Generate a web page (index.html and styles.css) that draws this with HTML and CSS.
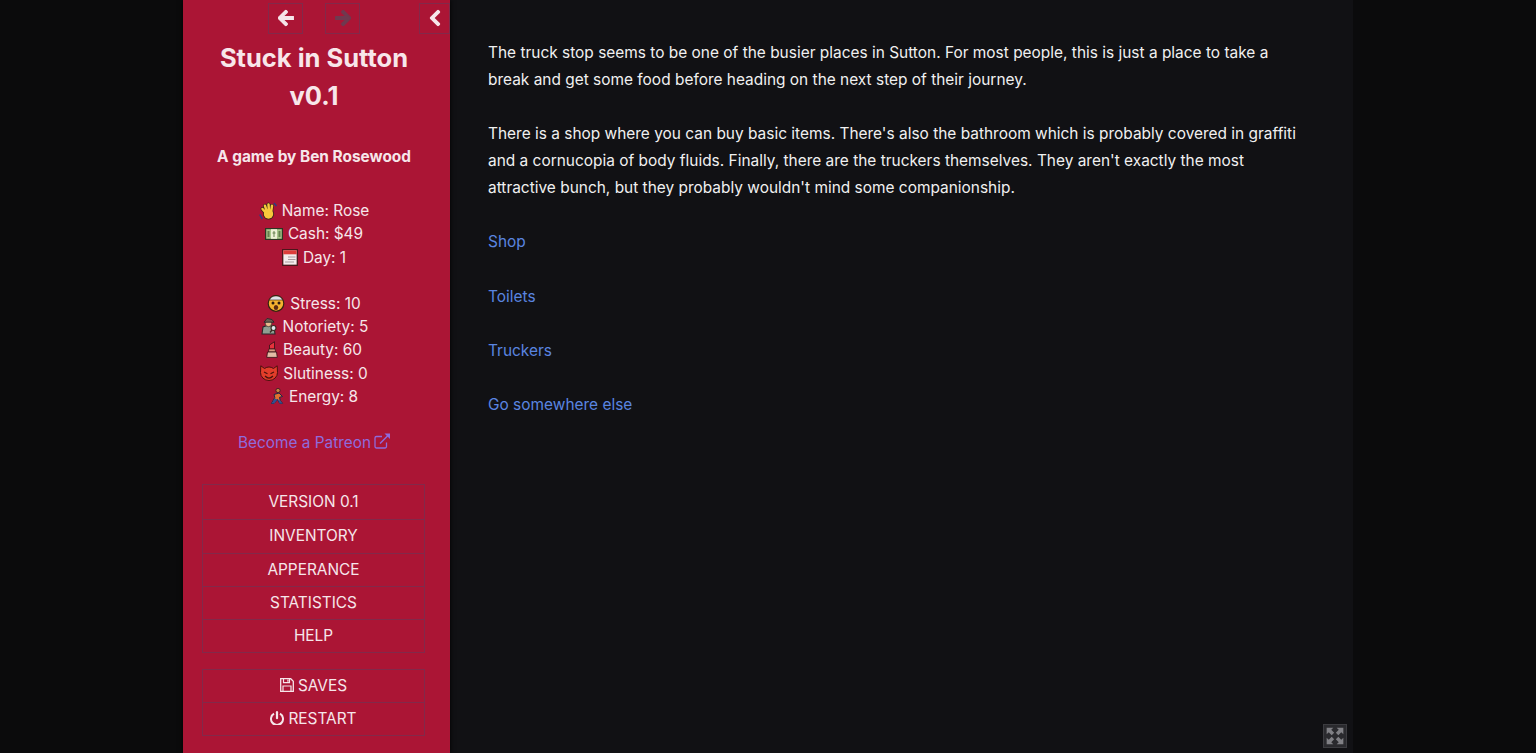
FILE: index.html
```html
<!DOCTYPE html>
<html lang="en">
<head>
<meta charset="utf-8">
<title>Stuck in Sutton</title>
<link rel="stylesheet" href="styles.css">
</head>
<body>
<div class="app">
  <aside class="sidebar">
    <div class="toolbar">
      <button class="tool tool-back" aria-label="Back"><svg viewBox="0 0 448 512" class="tool-icon"><path d="M257.5 445.1l-22.2 22.2c-9.4 9.4-24.6 9.4-33.9 0L7 273c-9.4-9.4-9.4-24.6 0-33.9L201.4 44.7c9.4-9.4 24.6-9.4 33.9 0l22.2 22.2c9.5 9.5 9.3 25-.4 34.3L136.6 216H424c13.3 0 24 10.7 24 24v32c0 13.3-10.7 24-24 24H136.6l120.5 114.8c9.8 9.3 10 24.8.4 34.3z"/></svg></button>
      <button class="tool tool-forward" aria-label="Forward"><svg viewBox="0 0 448 512" class="tool-icon dim"><path d="M190.5 66.9l22.2-22.2c9.4-9.4 24.6-9.4 33.9 0L441 239c9.4 9.4 9.4 24.6 0 33.9L246.6 467.3c-9.4 9.4-24.6 9.4-33.9 0l-22.2-22.2c-9.5-9.5-9.3-25 .4-34.3L311.4 296H24c-13.3 0-24-10.7-24-24v-32c0-13.3 10.7-24 24-24h287.4L190.9 101.2c-9.8-9.3-10-24.8-.4-34.3z"/></svg></button>
      <button class="tool tool-toggle" aria-label="Hide sidebar"><svg viewBox="0 0 320 512" class="tool-icon"><path d="M34.5 239L228.9 44.7c9.4-9.4 24.6-9.4 33.9 0l22.7 22.7c9.4 9.4 9.4 24.5 0 33.9L131.5 256l154 154.8c9.3 9.4 9.3 24.5 0 33.9l-22.7 22.7c-9.4 9.4-24.6 9.4-33.9 0L34.5 273c-9.4-9.4-9.4-24.6 0-34z"/></svg></button>
    </div>
    <h1 class="title">Stuck in Sutton<br>v0.1</h1>
    <p class="byline">A game by Ben Rosewood</p>

    <div class="stats">
      <div class="stat"><svg class="emoji" viewBox="0 0 18 18"><g fill="none" stroke="#33261a" stroke-width="3.800" stroke-linecap="round"><path d="M7 11L3.500 7M8 10L6 3.800M10 10L9.500 2.500M12 10.500L13 3.800"/></g><circle cx="9.500" cy="12" r="5.500" fill="#33261a"/><g fill="none" stroke="#f8c83c" stroke-width="2.500" stroke-linecap="round"><path d="M7 11L3.500 7M8 10L6 3.800M10 10L9.500 2.500M12 10.500L13 3.800"/></g><circle cx="9.500" cy="12" r="4.700" fill="#f8c83c"/><path d="M0.800 12.500l2.500 4.500M15 1l2.500 3" fill="none" stroke="#2c3f80" stroke-width="1.600"/></svg>Name: Rose</div>
      <div class="stat"><svg class="emoji emoji-cash" viewBox="0 0 18 12"><rect x="0.600" y="0.600" width="16.800" height="10.800" fill="#a8c48a" stroke="#2c3622" stroke-width="1.200"/><rect x="6" y="1.200" width="6" height="9.600" fill="#eef0d6"/><path d="M2.500 3h2v6h-2zM13.500 3h2v6h-2z" fill="#667f4e"/><path d="M9 3v6M7.500 5h3" stroke="#667f4e"/></svg>Cash: $49</div>
      <div class="stat"><svg class="emoji emoji-cal" viewBox="0 0 16 17"><rect x="0.700" y="0.700" width="14.600" height="15.600" fill="#f4ecec" stroke="#451418" stroke-width="1.300"/><rect x="1.300" y="1.300" width="13.400" height="4" fill="#dd3d3a"/><path d="M6 8h7.500M6 10.500h7.500M3 13h9" stroke="#a89a9e" stroke-width="1.100"/></svg>Day: 1</div>
      <div class="stat stat-gap"><svg class="emoji" viewBox="0 0 18 18"><circle cx="9" cy="9.500" r="7.800" fill="#f6b22f" stroke="#33240f" stroke-width="1.200"/><path d="M2.500 6C4 0.500 14 0.500 15.500 6z" fill="#dfe2ea" stroke="#33240f" stroke-width="0.600"/><circle cx="6" cy="9" r="1.500" fill="#2a1a10"/><circle cx="12" cy="9" r="1.500" fill="#2a1a10"/><ellipse cx="9" cy="13.500" rx="2.200" ry="2.500" fill="#5b2a10"/></svg>Stress: 10</div>
      <div class="stat"><svg class="emoji" viewBox="0 0 18 17"><path d="M2 16.500l1-7 5.500-2 5.500 2 1 7z" fill="#8f9e92" stroke="#27292a" stroke-width="1.100"/><circle cx="8.500" cy="6" r="3.200" fill="#e9bb8d" stroke="#27292a" stroke-width="0.700"/><path d="M4 4.700L7 1l5 1 2 2.700z" fill="#6d5d50" stroke="#27292a" stroke-width="0.900"/><circle cx="13.500" cy="10.500" r="2.500" fill="#dce8ee" stroke="#3a2a20" stroke-width="1.100"/><path d="M12 12.500l-2 2.500" stroke="#3a2a20" stroke-width="1.300"/></svg>Notoriety: 5</div>
      <div class="stat"><svg class="emoji emoji-lip" viewBox="0 0 12 17"><path d="M3.500 8V4L8.500 0.700V8z" fill="#e6323c" stroke="#40141a" stroke-width="0.900"/><path d="M2.800 8h6.400l.3 3H2.500z" fill="#d89a80" stroke="#40141a" stroke-width="0.800"/><path d="M1.500 11h9l.8 5.400H.7z" fill="#e2bca6" stroke="#40141a" stroke-width="0.900"/></svg>Beauty: 60</div>
      <div class="stat"><svg class="emoji" viewBox="0 0 18 16"><path d="M0.800 0.800L4.500 3.500a8 8 0 019 0L17.200 0.800l.3 6.700a8.500 8 0 11-17 0z" fill="#e23d2a" stroke="#4a120c" stroke-width="1"/><path d="M4 7l3.500 1.700M14 7l-3.500 1.700M5 11c2.500 2.700 5.500 2.700 8 0" stroke="#4a120c" stroke-width="1.200" fill="none"/></svg>Slutiness: 0</div>
      <div class="stat"><svg class="emoji emoji-run" viewBox="0 0 14 16"><circle cx="8" cy="2.500" r="2.100" fill="#c9853e" stroke="#1e1a20" stroke-width="0.700"/><path d="M4 6.500L9 5l3.500 3.500-3 .8.700 3 2.300 3H9.700L7.500 11.500 4 15.500H1.500l3.300-6z" fill="#e0722e" stroke="#1c2a4c" stroke-width="1"/><path d="M7.500 11.500L4 15.500H1.500l3.300-5zM10 12.500l2.500 3H9.700l-2-4z" fill="#2f4f96"/></svg>Energy: 8</div>
    </div>

    <a class="patreon" href="#">Become a Patreon<svg class="ext" viewBox="0 0 16 16"><path fill="none" stroke="currentColor" stroke-width="1.300" d="M12.500 9.500v4a1.500 1.500 0 01-1.500 1.500H2.500A1.500 1.500 0 011 13.500V5a1.500 1.500 0 011.500-1.500H8"/><path fill="none" stroke="currentColor" stroke-width="1.500" d="M6 10.500L14.500 2"/><path fill="currentColor" d="M10.500 .5H16V6z"/></svg></a>

    <nav class="menu">
      <a class="menu-item">VERSION 0.1</a>
      <a class="menu-item">INVENTORY</a>
      <a class="menu-item">APPERANCE</a>
      <a class="menu-item">STATISTICS</a>
      <a class="menu-item">HELP</a>
    </nav>
    <nav class="menu menu-system">
      <a class="menu-item"><svg class="mi" viewBox="0 0 14 14"><path fill="none" stroke="currentColor" stroke-width="1.300" d="M.7.700h10l2.600 2.600v10H.7z"/><path fill="none" stroke="currentColor" stroke-width="1.200" d="M3.500.700v4h6v-4M3 13.300V8h8v5.300"/><path fill="currentColor" d="M7.300 1.500h1.300v2.300H7.300z"/></svg>SAVES</a>
      <a class="menu-item"><svg class="mi mi-power" viewBox="0 0 14 14"><path fill="none" stroke="currentColor" stroke-width="2" d="M4 2.700a6 6 0 106 0"/><path fill="none" stroke="currentColor" stroke-width="2.200" stroke-linecap="round" d="M7 1.200v6"/></svg>RESTART</a>
    </nav>
  </aside>

  <main class="story">
    <p>The truck stop seems to be one of the busier places in Sutton. For most people, this is just a place to take a break and get some food before heading on the next step of their journey.</p>
    <p>There is a shop where you can buy basic items. There's also the bathroom which is probably covered in graffiti and a cornucopia of body fluids. Finally, there are the truckers themselves. They aren't exactly the most attractive bunch, but they probably wouldn't mind some companionship.</p>
    <p><a href="#">Shop</a></p>
    <p><a href="#">Toilets</a></p>
    <p><a href="#">Truckers</a></p>
    <p><a href="#">Go somewhere else</a></p>
    <button class="fullscreen" aria-label="Fullscreen"><svg viewBox="0 0 24 24"><path d="M2 2h8L7.500 4.500 11 8 8 11 4.500 7.500 2 10zM22 2v8l-2.500-2.500L16 11l-3-3 3.500-3.500L14 2zM2 22v-8l2.500 2.500L8 13l3 3-3.500 3.500L10 22zM22 22h-8l2.500-2.500L13 16l3-3 3.500 3.500L22 14z"/></svg></button>
  </main>
</div>
</body>
</html>
```
FILE: styles.css
```css
* { box-sizing: border-box; }
html, body { height: 100%; }
body {
  margin: 0;
  background: #0b0b0c;
  color: #eeeeee;
  font-family: Inter, "Liberation Sans", sans-serif;
  font-size: 15.4px;
  overflow: hidden;
}
.app {
  display: flex;
  width: 1170px;
  height: 753px;
  margin-left: 183px;
  background: #111114;
}
.sidebar {
  flex: 0 0 267px;
  height: 753px;
  background: #ab1535;
  color: #f6e6ea;
  text-align: center;
  padding: 0 21px 0 16px;
  box-shadow: 0 0 5px #000;
}
.toolbar { height: 36px; position: relative; }
.tool {
  position: absolute;
  top: 3px;
  width: 35px;
  height: 31px;
  padding: 0 0 2px;
  background: transparent;
  border: 1px solid #82294a;
  display: flex;
  align-items: center;
  justify-content: center;
}
.tool-back { left: 69px; }
.tool-forward { left: 126px; }
.tool-toggle { right: -21px; width: 31px; }
.tool-icon { width: 16px; height: 18px; fill: #f6e6ea; stroke: #f6e6ea; stroke-width: 30; }
.tool-icon.dim { fill: #6f3a50; stroke: #6f3a50; }
.title {
  margin: 3px 0 0;
  font-size: 25.5px;
  line-height: 38px;
  font-weight: 700;
  color: #f8e6ea;
}
.byline {
  margin: 30px 0 0;
  font-size: 15.4px;
  line-height: 23px;
  font-weight: 700;
}
.stats { margin-top: 31px; }
.stat { display: flex; align-items: center; justify-content: center; gap: 5px; height: 23.3px; }
.stat-gap { margin-top: 22.6px; }
.emoji { width: 18px; height: 18px; flex: none; }
.emoji-cash { height: 12px; }
.emoji-cal { width: 16px; height: 17px; }
.emoji-lip { width: 12px; height: 17px; }
.emoji-run { width: 14px; height: 16px; }
.patreon {
  display: block;
  margin-top: 23px;
  height: 24px;
  line-height: 24px;
  color: #8f6bdc;
  text-decoration: none;
}
.ext { width: 16px; height: 16px; margin-left: 3px; vertical-align: -1px; }
.menu {
  margin: 29px 4px 0 3px;
  border: 1px solid #82294a;
}
.menu-system { margin-top: 16px; }
.menu-item {
  display: flex;
  align-items: center;
  justify-content: center;
  gap: 4px;
  height: 33px;
  padding-bottom: 1px;
  color: #f6e6ea;
  border-bottom: 1px solid #82294a;
}
.menu-item:first-child { height: 35px; }
.menu-item:nth-child(2) { height: 34px; }
.menu-item:last-child { height: 32px; border-bottom: 0; }
.menu-system .menu-item:first-child { height: 33px; }
.mi { width: 14px; height: 14px; flex: none; }
.story {
  flex: 1;
  position: relative;
  padding: 39px 55px 0 38px;
  font-size: 15.45px;
  line-height: 27px;
  color: #f0f0f0;
}
.story p { margin: 0 0 27.2px; }
.story a { color: #5a85e0; text-decoration: none; }
.fullscreen {
  position: absolute;
  right: 6px;
  bottom: 5px;
  width: 24px;
  height: 24px;
  padding: 1px;
  background: #2a2a2e;
  border: 1px solid #3c3c40;
}
.fullscreen svg { width: 100%; height: 100%; fill: #808085; display: block; }
```
